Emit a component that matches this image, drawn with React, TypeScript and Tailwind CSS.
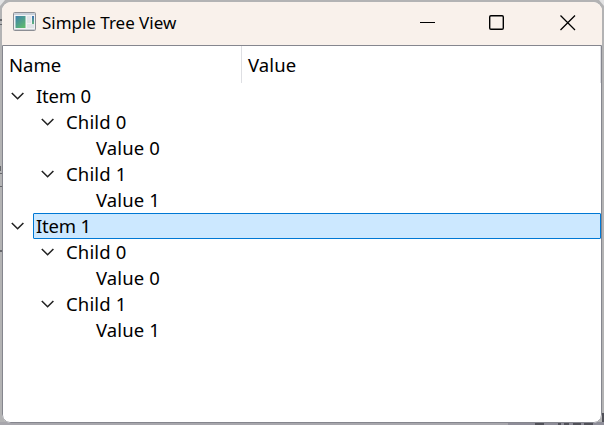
import React from "react";

type Node = { label: string; level: number; leaf?: boolean; selected?: boolean };

const rows: Node[] = [
  { label: "Item 0", level: 0 },
  { label: "Child 0", level: 1 },
  { label: "Value 0", level: 2, leaf: true },
  { label: "Child 1", level: 1 },
  { label: "Value 1", level: 2, leaf: true },
  { label: "Item 1", level: 0, selected: true },
  { label: "Child 0", level: 1 },
  { label: "Value 0", level: 2, leaf: true },
  { label: "Child 1", level: 1 },
  { label: "Value 1", level: 2, leaf: true },
];

const indents = ["pl-0", "pl-[30px]", "pl-[60px]"];
const trackings = ["tracking-[-0.2px]", "tracking-[0.15px]", "tracking-[0.1px]"];

function AppIcon() {
  return (
    <svg width="24" height="20" viewBox="0 0 24 20" className="shrink-0">
      <defs>
        <linearGradient id="pane" x1="0" y1="0" x2="0.7" y2="1">
          <stop offset="0" stopColor="#3f7fae" />
          <stop offset="1" stopColor="#5cb870" />
        </linearGradient>
        <linearGradient id="side" x1="0" y1="0" x2="0" y2="1">
          <stop offset="0" stopColor="#3c70b4" />
          <stop offset="1" stopColor="#62b77b" />
        </linearGradient>
      </defs>
      <rect x="0.5" y="0.5" width="22" height="18" rx="1" fill="#f1f2f4" stroke="#8c8e94" />
      <rect x="1" y="1" width="21" height="2" fill="#c9d0da" />
      <path d="M1 17.5H22" stroke="#c9cdd4" />
      <rect x="2.5" y="4" width="10" height="12" fill="url(#pane)" />
      <rect x="14" y="4" width="4" height="7" fill="#e0e4e8" />
      <rect x="14" y="12" width="7" height="4" fill="#e0e4e8" />
      <rect x="19" y="4" width="2" height="8" fill="url(#side)" />
    </svg>
  );
}

function Chevron() {
  return (
    <svg width="14" height="8" viewBox="0 0 14 8" fill="none" stroke="#222" strokeWidth="1.6">
      <path d="M0.8 1L6.6 6.7L12.4 1" />
    </svg>
  );
}

function TreeRow({ label, level, leaf, selected }: Node) {
  return (
    <div className={`flex h-[26px] ${indents[level]}`}>
      <div className="flex w-[30px] shrink-0 items-center pl-2">{!leaf && <Chevron />}</div>
      <div
        className={`flex flex-1 items-center rounded-[1px] border pl-[2px] ${
          selected ? "border-[#0078d4] bg-[#cce8ff]" : "border-transparent"
        }`}
      >
        <span className={`whitespace-nowrap ${trackings[level]}`}>{label}</span>
      </div>
    </div>
  );
}

function Backdrop() {
  return (
    <svg width="604" height="425" viewBox="0 0 604 425" className="absolute left-0 top-0">
      <path d="M0 0H5L0 6ZM604 0H599L604 6Z" fill="#e3e3e4" />
      <g fill="#66676b">
        <rect x="0" y="19" width="2" height="2" />
        <rect x="0" y="24" width="2" height="1" />
        <rect x="0" y="166" width="1" height="5" />
        <rect x="0" y="173" width="2" height="1" />
        <rect x="0" y="186" width="2" height="1" />
        <rect x="0" y="250" width="2" height="2" />
      </g>
      <rect x="0" y="422" width="508" height="3" fill="#a7a6ac" />
      <rect x="508" y="422" width="96" height="3" fill="#8e8d98" />
      <g fill="#505058">
        <rect x="535" y="423" width="9" height="2" />
        <rect x="558" y="423" width="3" height="2" />
        <rect x="564" y="423" width="5" height="2" />
        <rect x="573" y="423" width="8" height="2" />
        <rect x="584" y="423" width="9" height="2" />
        <rect x="602" y="413" width="2" height="9" />
      </g>
    </svg>
  );
}

export default function App() {
  return (
    <div className="relative h-[425px] w-[604px] overflow-hidden bg-[#b3b3b4] pl-[2px] pt-[2px] font-['Noto_Sans','Open_Sans',sans-serif] text-black">
      <Backdrop />
      <div className="relative flex h-[421px] w-[600px] flex-col overflow-hidden rounded-[9px] bg-white">
        <header className="flex h-[43px] shrink-0 items-center bg-[#f9f1eb]">
          <div className="flex flex-1 items-center pb-[3px] pl-[11px]">
            <AppIcon />
            <span className="pl-[5px] text-[17px] leading-none tracking-[-0.02px]">Simple Tree View</span>
          </div>
          <svg width="160" height="18" viewBox="0 0 160 18" fill="none" stroke="black" className="mb-[3px] mr-[26px]">
            <path d="M4 9.5H19" />
            <rect x="73.7" y="2.7" width="13.6" height="13.6" rx="1.2" strokeWidth="1.4" />
            <path d="M144.5 2.5L159 17M159 2.5L144.5 17" strokeWidth="1.3" />
          </svg>
        </header>
        <main className="flex-1 rounded-b-[8px] border border-[#85868e] bg-white text-[18.5px] leading-[24px]">
          <div className="flex h-[37px] items-center">
            <div className="flex h-full w-[239px] items-center border-r border-[#dedfe3] pl-[6px]">
              <span className="tracking-[0px]">Name</span>
            </div>
            <div className="flex h-full flex-1 items-center border-r border-[#dedfe3] pl-[6px]">
              <span className="tracking-[0.1px]">Value</span>
            </div>
          </div>
          {rows.map((row, i) => (
            <TreeRow key={i} {...row} />
          ))}
        </main>
      </div>
    </div>
  );
}
